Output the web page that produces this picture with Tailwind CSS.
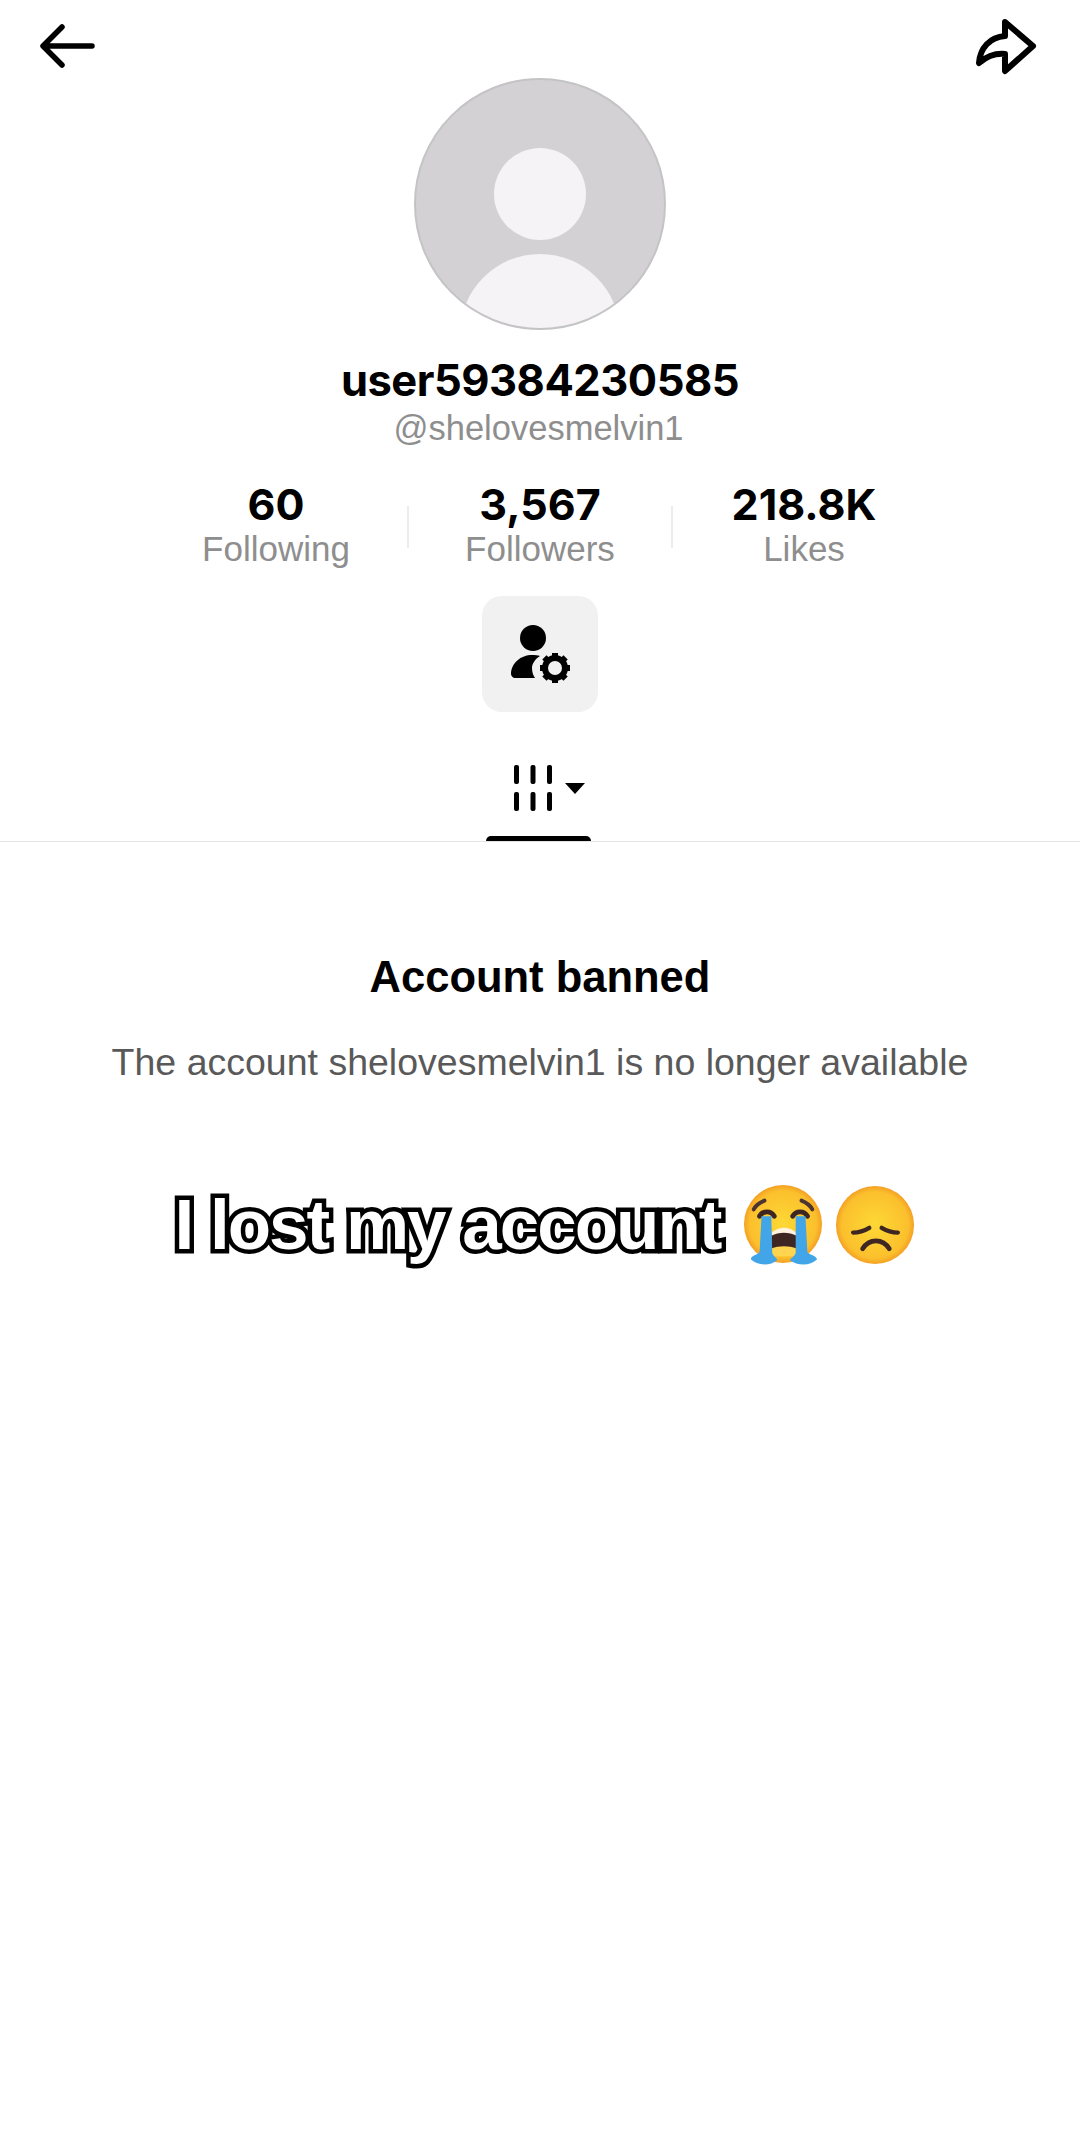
<!DOCTYPE html>
<html lang="en">

<head>
    <meta charset="UTF-8">
    <meta name="viewport" content="width=device-width, initial-scale=1.0">
    <title>Profile</title>
    <script src="https://cdn.jsdelivr.net/npm/@tailwindcss/browser@4"></script>
</head>

<body class="bg-white font-['Liberation_Sans',sans-serif]">
    <div class="w-[1080px] h-[2140px] flex flex-col items-center overflow-hidden">
        <!-- top bar -->
        <div class="w-full h-[78px] pl-[38px] pr-[42px] flex justify-between items-start shrink-0">
            <svg class="w-[60px] h-[50px] mt-[21px]" viewBox="0 0 60 50" fill="none" stroke="black" stroke-width="5.500" stroke-linecap="round" stroke-linejoin="round">
                <path d="M54 25H6M24 6 5 25l19 19" />
            </svg>
            <svg class="w-[66px] h-[62px] mt-[15px]" viewBox="0 0 66 62" fill="none" stroke="black" stroke-width="6" stroke-linejoin="round">
                <path d="M33 7 61 31 33 56V39C22 38 14 42 7 48 8 33 18 22 33 21Z" />
            </svg>
        </div>

        <!-- avatar -->
        <div class="relative w-[252px] h-[252px] rounded-full bg-[#d3d1d4] border-2 border-[#c4c3c5] overflow-hidden shrink-0">
            <div class="absolute left-[78px] top-[68px] w-[92px] h-[92px] rounded-full bg-[#f5f3f5]"></div>
            <div class="absolute left-[44px] top-[174px] w-[160px] h-[160px] rounded-full bg-[#f5f3f5]"></div>
        </div>

        <h1 class="mt-[25px] h-[50px] leading-[50px] text-[43.500px] font-bold text-black font-['Inter',sans-serif] tracking-[-0.5px]">user59384230585</h1>
        <p class="mt-[1px] -ml-[3px] h-[44px] leading-[44px] text-[34.500px] text-[#8e8e8e]">@shelovesmelvin1</p>

        <!-- stats -->
        <div class="mt-[32px] flex items-center">
            <div class="w-[262px] flex flex-col items-center">
                <span class="h-[44px] leading-[44px] text-[43px] font-bold text-black font-['Inter',sans-serif]">60</span>
                <span class="mt-[1px] h-[44px] leading-[44px] text-[35px] text-[#8e8e8e]">Following</span>
            </div>
            <div class="w-[2px] h-[42px] bg-[#ececec]"></div>
            <div class="w-[262px] flex flex-col items-center">
                <span class="h-[44px] leading-[44px] text-[43px] font-bold text-black font-['Inter',sans-serif]">3,567</span>
                <span class="mt-[1px] h-[44px] leading-[44px] text-[35px] text-[#8e8e8e]">Followers</span>
            </div>
            <div class="w-[2px] h-[42px] bg-[#ececec]"></div>
            <div class="w-[262px] flex flex-col items-center">
                <span class="h-[44px] leading-[44px] text-[43px] font-bold text-black font-['Inter',sans-serif]">218.8K</span>
                <span class="mt-[1px] h-[44px] leading-[44px] text-[35px] text-[#8e8e8e]">Likes</span>
            </div>
        </div>

        <!-- manage account button -->
        <div class="mt-[25px] w-[116px] h-[116px] rounded-[20px] bg-[#f1f1f1] flex items-center justify-center shrink-0">
            <svg class="w-[60px] h-[60px]" viewBox="0 0 60 60">
                <circle cx="23" cy="14" r="13" fill="black" />
                <path d="M1 50C1 39 11 31 22 31c3 0 6 .4 8 1-5 3-8 8-8 12 0 4 1 7 3 10H5c-2 0-4-2-4-4Z" fill="black" />
                <path d="M45 29v30M30 44h30M34.400 33.400l21.200 21.200M55.600 33.400 34.400 54.600" stroke="black" stroke-width="6" />
                <circle cx="45" cy="44" r="10" fill="none" stroke="black" stroke-width="6" />
                <circle cx="45" cy="44" r="7" fill="#f1f1f1" />
            </svg>
        </div>

        <!-- tab -->
        <div class="mt-[53px] w-full h-[77px] border-b border-[#e4e4e4] flex flex-col items-center shrink-0">
            <div class="flex items-center h-[46px] ml-[19px]">
                <svg class="w-[38px] h-[46px]" viewBox="0 0 38 46" fill="black">
                    <rect x="0" y="0" width="5" height="19" rx="2" />
                    <rect x="16.500" y="0" width="5" height="19" rx="2" />
                    <rect x="33" y="0" width="5" height="19" rx="2" />
                    <rect x="0" y="27" width="5" height="19" rx="2" />
                    <rect x="16.500" y="27" width="5" height="19" rx="2" />
                    <rect x="33" y="27" width="5" height="19" rx="2" />
                </svg>
                <svg class="ml-[13px] w-[20px] h-[11px]" viewBox="0 0 20 11" fill="black">
                    <path d="M0 0h20L10 11Z" />
                </svg>
            </div>
            <div class="mt-[25px] -ml-[3px] w-[105px] h-[5px] rounded-t-[5px] bg-black"></div>
        </div>

        <!-- banned message -->
        <h2 class="mt-[111px] h-[48px] leading-[48px] text-[43.500px] font-bold text-black">Account banned</h2>
        <p class="mt-[39px] h-[44px] leading-[44px] text-[37.500px] text-[#595959]">The account shelovesmelvin1 is no longer available</p>

        <!-- caption -->
        <div class="mt-[96px] ml-[10px] flex items-center h-[90px]">
            <span class="text-[71px] font-bold leading-[90px] text-white [-webkit-text-stroke:9px_black] [paint-order:stroke_fill] tracking-[-2px]">I lost my account</span>
            <svg class="ml-[22px] w-[82px] h-[82px]" viewBox="0 0 84 84">
                <defs>
                    <radialGradient id="face">
                        <stop offset="0" stop-color="#fdd835" />
                        <stop offset="0.850" stop-color="#fbc02d" />
                        <stop offset="1" stop-color="#f4a024" />
                    </radialGradient>
                </defs>
                <circle cx="42" cy="41" r="40" fill="url(#face)" />
                <path d="M12 26c2-4 6-7 11-9M72 26c-2-4-6-7-11-9" fill="none" stroke="#4e342e" stroke-width="4" stroke-linecap="round" />
                <path d="M30 50c8-7 18-7 26 0v24H30Z" fill="#ffd54f" />
                <path d="M30 50c8-4 18-4 26 0v16c-8-3-18-3-26 0Z" fill="#3e2723" />
                <path d="M30 50c8-7 18-7 26 0v3c-8-4-18-4-26 0Z" fill="#fff3e0" />
                <path d="M18 33c3-6 12-6 15 0M52 33c3-6 12-6 15 0" fill="none" stroke="#3e2723" stroke-width="5" stroke-linecap="round" />
                <path d="M20 33h10l1 38c2 4 5 5 5 7-7 6-20 6-27-1 1-4 6-4 9-7Z" fill="#42a5e8" />
                <path d="M55 33h10l2 37c3 3 8 3 10 7-7 7-20 7-28 1 1-2 4-3 6-7Z" fill="#42a5e8" />
            </svg>
            <svg class="ml-[11px] w-[80px] h-[80px]" viewBox="0 0 84 84">
                <defs>
                    <radialGradient id="face2">
                        <stop offset="0" stop-color="#fdd835" />
                        <stop offset="0.850" stop-color="#fbc02d" />
                        <stop offset="1" stop-color="#f4a024" />
                    </radialGradient>
                </defs>
                <circle cx="42" cy="42" r="41" fill="url(#face2)" />
                <path d="M19 50c6 0 12-2 17-5M66 50c-6 0-12-2-17-5" fill="none" stroke="#3e2723" stroke-width="4.500" stroke-linecap="round" />
                <path d="M29 67c7-11 21-11 28 0" fill="none" stroke="#3e2723" stroke-width="5" stroke-linecap="round" />
            </svg>
        </div>
    </div>
</body>

</html>
